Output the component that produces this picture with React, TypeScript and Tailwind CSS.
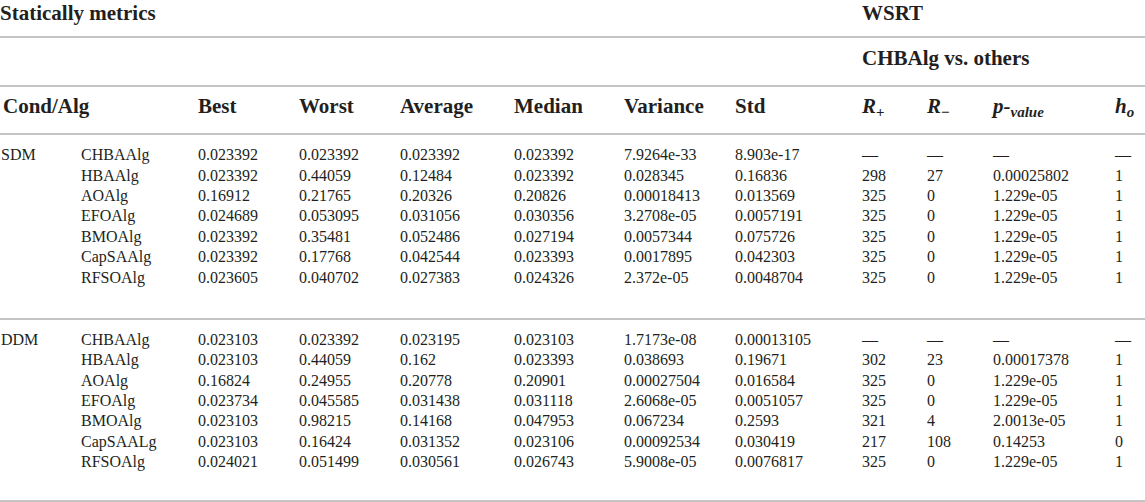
import React from "react";

const W = ["w-[81px]", "w-[117px]", "w-[101px]", "w-[101px]", "w-[114px]", "w-[110px]", "w-[111px]", "w-[127px]", "w-[65px]", "w-[66px]", "w-[122px]", "w-[30px]"];

const sdm: string[][] = [
  ["CHBAAlg", "0.023392", "0.023392", "0.023392", "0.023392", "7.9264e-33", "8.903e-17", "—", "—", "—", "—"],
  ["HBAAlg", "0.023392", "0.44059", "0.12484", "0.023392", "0.028345", "0.16836", "298", "27", "0.00025802", "1"],
  ["AOAlg", "0.16912", "0.21765", "0.20326", "0.20826", "0.00018413", "0.013569", "325", "0", "1.229e-05", "1"],
  ["EFOAlg", "0.024689", "0.053095", "0.031056", "0.030356", "3.2708e-05", "0.0057191", "325", "0", "1.229e-05", "1"],
  ["BMOAlg", "0.023392", "0.35481", "0.052486", "0.027194", "0.0057344", "0.075726", "325", "0", "1.229e-05", "1"],
  ["CapSAAlg", "0.023392", "0.17768", "0.042544", "0.023393", "0.0017895", "0.042303", "325", "0", "1.229e-05", "1"],
  ["RFSOAlg", "0.023605", "0.040702", "0.027383", "0.024326", "2.372e-05", "0.0048704", "325", "0", "1.229e-05", "1"],
];

const ddm: string[][] = [
  ["CHBAAlg", "0.023103", "0.023392", "0.023195", "0.023103", "1.7173e-08", "0.00013105", "—", "—", "—", "—"],
  ["HBAAlg", "0.023103", "0.44059", "0.162", "0.023393", "0.038693", "0.19671", "302", "23", "0.00017378", "1"],
  ["AOAlg", "0.16824", "0.24955", "0.20778", "0.20901", "0.00027504", "0.016584", "325", "0", "1.229e-05", "1"],
  ["EFOAlg", "0.023734", "0.045585", "0.031438", "0.031118", "2.6068e-05", "0.0051057", "325", "0", "1.229e-05", "1"],
  ["BMOAlg", "0.023103", "0.98215", "0.14168", "0.047953", "0.067234", "0.2593", "321", "4", "2.0013e-05", "1"],
  ["CapSAALg", "0.023103", "0.16424", "0.031352", "0.023106", "0.00092534", "0.030419", "217", "108", "0.14253", "0"],
  ["RFSOAlg", "0.024021", "0.051499", "0.030561", "0.026743", "5.9008e-05", "0.0076817", "325", "0", "1.229e-05", "1"],
];

function Group({ label, rows, pb }: { label: string; rows: string[][]; pb: string }) {
  return (
    <div className={`border-b-2 border-[#c4c4c4] pt-[10px] ${pb}`}>
      {rows.map((r, i) => (
        <div key={i} className="flex h-[20.4px] items-center leading-[20px]">
          <div className={`${W[0]} shrink-0 pl-[1px]`}>{i === 0 ? label : ""}</div>
          {r.map((c, j) => (
            <div key={j} className={`${W[j + 1]} shrink-0 whitespace-nowrap`}>
              {c}
            </div>
          ))}
        </div>
      ))}
    </div>
  );
}

export default function App() {
  return (
    <div
      className="w-[1145px] h-[502px] overflow-hidden bg-white text-[16px] text-[#231f20]"
      style={{ fontFamily: '"Liberation Serif", "Times New Roman", serif' }}
    >
      {/* Row 1 */}
      <div className="flex h-[38px] border-b-2 border-[#c4c4c4] text-[21px] font-bold leading-[26px]">
        <div className="w-[862px] shrink-0">Statically metrics</div>
        <div>WSRT</div>
      </div>
      {/* Row 2 */}
      <div className="flex h-[49px] border-b-2 border-[#c4c4c4] pt-[7px] text-[21px] font-bold leading-[26px]">
        <div className="w-[862px] shrink-0"></div>
        <div>CHBAlg vs. others</div>
      </div>
      {/* Row 3 */}
      <div className="flex h-[48px] items-start border-b-2 border-[#c4c4c4] pt-[6px] text-[21px] font-bold leading-[26px]">
        <div className="w-[198px] shrink-0 pl-[3px]">Cond/Alg</div>
        <div className={`${W[2]} shrink-0`}>Best</div>
        <div className={`${W[3]} shrink-0`}>Worst</div>
        <div className={`${W[4]} shrink-0`}>Average</div>
        <div className={`${W[5]} shrink-0`}>Median</div>
        <div className={`${W[6]} shrink-0`}>Variance</div>
        <div className={`${W[7]} shrink-0`}>Std</div>
        <div className={`${W[8]} shrink-0 italic`}>
          R<sub className="not-italic text-[15px] font-bold">+</sub>
        </div>
        <div className={`${W[9]} shrink-0 italic`}>
          R<sub className="not-italic text-[15px] font-bold">−</sub>
        </div>
        <div className={`${W[10]} shrink-0 italic`}>
          p-<sub className="text-[15px]">value</sub>
        </div>
        <div className={`${W[11]} shrink-0 italic`}>
          h<sub className="text-[15px]">o</sub>
        </div>
      </div>
      <Group label="SDM" rows={sdm} pb="pb-[30px]" />
      <Group label="DDM" rows={ddm} pb="pb-[28px]" />
    </div>
  );
}
